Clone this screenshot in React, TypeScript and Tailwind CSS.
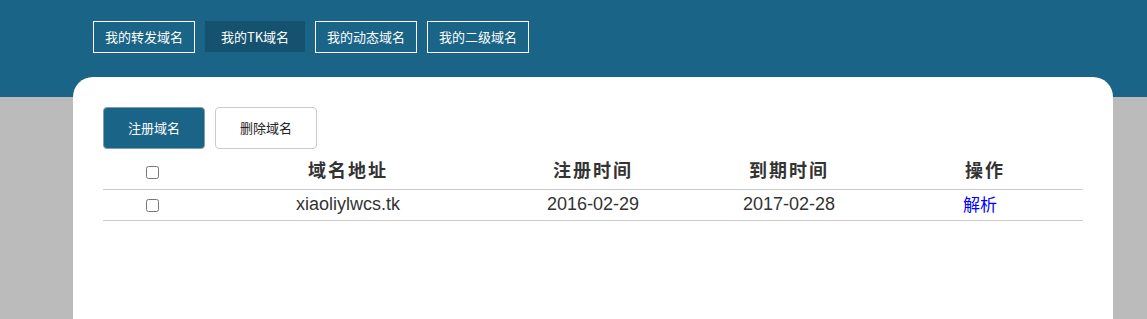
import React from "react";

const navItems = [
  { label: "我的转发域名", active: false },
  { label: "我的TK域名", active: true },
  { label: "我的动态域名", active: false },
  { label: "我的二级域名", active: false },
];

export default function App() {
  return (
    <div className="w-[1147px] h-[319px] overflow-hidden bg-[#bbbbbb] font-['Noto_Sans_CJK_SC',sans-serif]">
      <div className="h-[97px] bg-[#1a6487] pt-[21px] pl-[93px]">
        <div className="flex items-start gap-[10px]">
          {navItems.map((n) =>
            n.active ? (
              <div
                key={n.label}
                className="w-[100px] h-[31px] bg-[#14526f] text-white text-[13px] flex items-center justify-center"
              >
                {n.label}
              </div>
            ) : (
              <div
                key={n.label}
                className="w-[102px] h-[32px] border border-white text-white text-[13px] flex items-center justify-center"
              >
                {n.label}
              </div>
            )
          )}
        </div>
      </div>
      <div className="relative -mt-[20px] ml-[73px] w-[1040px] h-[300px] bg-white rounded-t-[20px] px-[30px] pt-[30px]">
        <div className="flex gap-[10px]">
          <button className="w-[102px] h-[42px] rounded-[4px] bg-[#1a6487] border border-[#7f9fb0] text-white text-[13px]">
            注册域名
          </button>
          <button className="w-[102px] h-[42px] rounded-[4px] bg-white border border-[#cccccc] text-[#222] text-[13px]">
            删除域名
          </button>
        </div>
        <table className="mt-[2px] w-[980px] border-collapse table-fixed">
          <colgroup>
            <col className="w-[98px]" />
            <col className="w-[294px]" />
            <col className="w-[196px]" />
            <col className="w-[196px]" />
            <col className="w-[196px]" />
          </colgroup>
          <thead>
            <tr className="h-[38px] border-b border-[#cccccc] text-[#333] text-[18px] tracking-[2px] font-bold">
              <th className="text-center p-0 align-middle">
                <input type="checkbox" className="w-[13px] h-[13px] align-middle" />
              </th>
              <th className="text-center p-0">域名地址</th>
              <th className="text-center p-0">注册时间</th>
              <th className="text-center p-0">到期时间</th>
              <th className="text-center p-0">操作</th>
            </tr>
          </thead>
          <tbody>
            <tr className="h-[31px] border-b border-[#cccccc] text-[#333] text-[18px] font-['Liberation_Sans',Arial,sans-serif]">
              <td className="text-center p-0 align-middle">
                <input type="checkbox" className="w-[13px] h-[13px] align-middle" />
              </td>
              <td className="text-center p-0">xiaoliylwcs.tk</td>
              <td className="text-center p-0">2016-02-29</td>
              <td className="text-center p-0">2017-02-28</td>
              <td className="text-center p-0 pr-[10px]">
                <a className="text-[#0000ff] text-[17px] font-['Noto_Sans_CJK_SC',sans-serif]">解析</a>
              </td>
            </tr>
          </tbody>
        </table>
      </div>
    </div>
  );
}
